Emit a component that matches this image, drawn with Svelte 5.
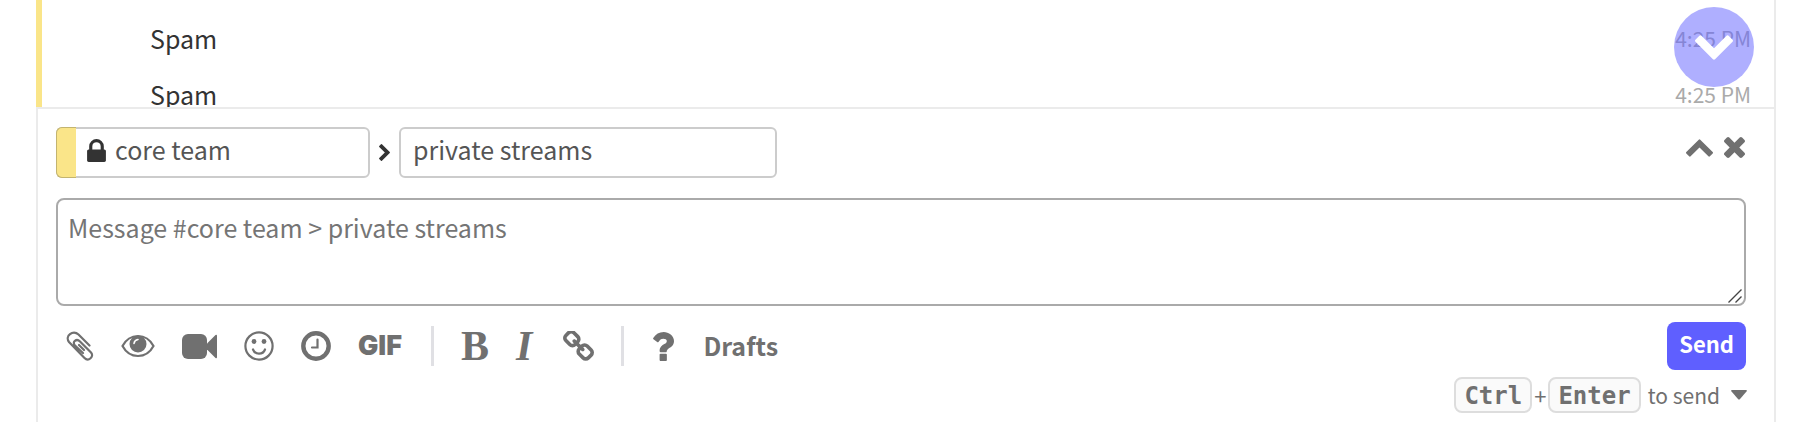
<script lang="ts">
    type Message = { content: string; time: string };

    let {
        messages = [
            { content: "Spam", time: "4:25 PM" },
            { content: "Spam", time: "4:25 PM" },
        ],
    }: { messages?: Message[] } = $props();

    let stream = $state("core team");
    let topic = $state("private streams");
    let draft = $state("");

    let placeholder = $derived(`Message #${stream} > ${topic}`);

    const chevron =
        "M1683 1331l-166 165q-19 19-45 19t-45-19l-531-531-531 531q-19 19-45 19t-45-19l-166-165q-19-19-19-45.5t19-45.5l742-741q19-19 45-19t45 19l742 741q19 19 19 45.5t-19 45.5z";
</script>

<main class="column">
    <section class="feed">
        {#each messages as message}
            <div class="message">
                <span class="message_content">{message.content}</span>
                <a class="message_time" href="#top">{message.time}</a>
            </div>
        {/each}
        <button class="scroll-down" aria-label="Scroll to bottom">
            <svg width="38" height="25" viewBox="-1702 -1515 1612 1035"><path transform="rotate(180)" d={chevron} /></svg>
        </button>
    </section>

    <form class="compose" onsubmit={(e) => e.preventDefault()}>
        <!-- Recipient -->
        <div class="recipient">
            <label class="stream">
                <span class="stream_color"></span>
                <svg class="stream_lock" width="19" height="23" viewBox="320 128 1152 1408"><path d="M640 768h512v-192q0-106-75-181t-181-75-181 75-75 181v192zm832 96v576q0 40-28 68t-68 28h-960q-40 0-68-28t-28-68v-576q0-40 28-68t68-28h32v-192q0-184 132-316t316-132 316 132 132 316v192h32q40 0 68 28t28 68z" /></svg>
                <input class="stream_input" type="text" aria-label="Stream" bind:value={stream} />
            </label>
            <svg class="recipient_arrow" width="11" height="17" viewBox="-1515 90 1035 1612"><path transform="rotate(90)" d={chevron} /></svg>
            <input class="topic" type="text" aria-label="Topic" bind:value={topic} />
            <div class="window-buttons">
                <button type="button" aria-label="Expand compose box">
                    <svg width="27" height="18" viewBox="90 480 1612 1035"><path d={chevron} /></svg>
                </button>
                <button type="button" aria-label="Close compose box">
                    <svg width="21" height="21" viewBox="302 366 1188 1188"><path d="M1490 1322q0 40-28 68l-136 136q-28 28-68 28t-68-28l-294-294-294 294q-28 28-68 28t-68-28l-136-136q-28-28-28-68t28-68l294-294-294-294q-28-28-28-68t28-68l136-136q28-28 68-28t68 28l294 294 294-294q28-28 68-28t68 28l136 136q28 28 28 68t-28 68l-294 294 294 294q28 28 28 68z" /></svg>
                </button>
            </div>
        </div>

        <!-- Message body -->
        <div class="editor">
            <textarea aria-label="Message" {placeholder} bind:value={draft}></textarea>
            <svg class="editor_grip" width="14" height="14" viewBox="0 0 14 14"><path d="M.5 13.5l13-13M7.5 13.5l6-6" /></svg>
        </div>

        <!-- Toolbar -->
        <div class="toolbar">
            <div class="tools">
                <button type="button" class="tool" aria-label="Upload files">
                    <svg width="28" height="30" viewBox="0 0 28 30" class="line"><path d="M23.5 14.5L12.5 3.500C7-1.500-1.500 5 3 11L18.500 27C22.500 31 28.500 25.500 25 21.500L14 10.500C10.500 7 5.500 11 9 14.500L17 22M13 14l5 5" /></svg>
                </button>
                <button type="button" class="tool" aria-label="Preview">
                    <svg width="34" height="24" viewBox="0 0 34 24"><path class="line" d="M1.500 12C5 5.500 10.500 2 17 2s12 3.500 15.500 10C29 18.500 23.500 22 17 22S5 18.500 1.500 12z" /><circle cx="17" cy="10" r="8.500" /><path class="glint" d="M13 9.500q.5-3.500 4-4" /></svg>
                </button>
                <button type="button" class="tool" aria-label="Add video call">
                    <svg width="35" height="25" viewBox="0 0 35 25"><rect width="25" height="25" rx="6" /><path d="M25 9.500L33.500 1q1.500-1 1.500 1v21q0 2-1.500 1L25 15.500z" /></svg>
                </button>
                <button type="button" class="tool" aria-label="Add emoji">
                    <svg width="30" height="30" viewBox="0 0 30 30"><circle class="line" cx="15" cy="15" r="13.600" /><circle cx="10" cy="10.500" r="2.400" /><circle cx="20" cy="10.500" r="2.400" /><path class="line" d="M9 18.500c2 5.500 10 5.500 12 0" /></svg>
                </button>
                <button type="button" class="tool" aria-label="Add global time">
                    <svg width="30" height="30" viewBox="0 0 30 30"><circle class="line clock" cx="15" cy="15" r="12.700" /><path class="line" d="M16.500 8.500v8H11" /></svg>
                </button>
                <button type="button" class="tool gif">GIF</button>
                <span class="divider"></span>
                <button type="button" class="tool bold" aria-label="Bold">B</button>
                <button type="button" class="tool italic" aria-label="Italic">I</button>
                <button type="button" class="tool" aria-label="Link">
                    <svg width="31" height="31" viewBox="80 80 1632 1632"><path d="M1520 1216q0-40-28-68l-208-208q-28-28-68-28-42 0-72 32 3 3 19 18.500t21.500 21.500 15 19 13 25.500 3.500 27.500q0 40-28 68t-68 28q-15 0-27.500-3.500t-25.500-13-19-15-21.500-21.500-18.500-19q-33 31-33 73 0 40 28 68l206 207q27 27 68 27 40 0 68-26l147-146q28-28 28-67zm-703-705q0-40-28-68l-206-207q-28-28-68-28-39 0-68 27l-147 146q-28 28-28 67 0 40 28 68l208 208q27 27 68 27 42 0 72-31-3-3-19-18.500t-21.500-21.500-15-19-13-25.500-3.500-27.500q0-40 28-68t68-28q15 0 27.500 3.500t25.500 13 19 15 21.500 21.500 18.500 19q33-31 33-73zm895 705q0 120-85 203l-147 146q-83 83-203 83-121 0-204-85l-206-207q-83-83-83-203 0-123 88-209l-88-88q-86 88-208 88-120 0-204-84l-208-208q-84-84-84-204t85-203l147-146q83-83 203-83 121 0 204 85l206 207q83 83 83 203 0 123-88 209l88 88q86-88 208-88 120 0 204 84l208 208q84 84 84 204z" /></svg>
                </button>
                <span class="divider"></span>
                <button type="button" class="tool" aria-label="Message formatting">
                    <svg width="23" height="29" viewBox="387 256 1017 1280"><path d="M1088 1256v240q0 16-12 28t-28 12h-240q-16 0-28-12t-12-28v-240q0-16 12-28t28-12h240q16 0 28 12t12 28zm316-600q0 54-15.500 101t-35 76.500-55 59.500-57.500 43.500-61 35.500q-41 23-68.500 65t-27.500 67q0 17-12 32.500t-28 15.500h-240q-15 0-25.500-18.500t-10.500-37.500v-45q0-83 65-156.500t143-108.500q59-27 84-56t25-76q0-42-46.500-74t-107.500-32q-65 0-108 29-35 25-107 115-13 16-31 16-12 0-25-8l-164-125q-13-10-15.500-25t5.500-28q160-266 464-266 80 0 161 31t146 83 106 127.500 41 158.500z" /></svg>
                </button>
                <a class="drafts" href="#drafts">Drafts</a>
            </div>
            <button type="submit" class="send">Send</button>
        </div>

        <div class="hint">
            <kbd>Ctrl</kbd><span class="plus">+</span><kbd>Enter</kbd>
            <button type="button" class="hint_menu">
                <span>to send</span>
                <svg width="16" height="10" viewBox="0 0 16 10"><path d="M1 0h14q1.500 0 .5 1.500L9 9q-1 1-2 0L.5 1.500Q-.5 0 1 0z" /></svg>
            </button>
        </div>
    </form>
</main>

<style>
    :global(body) {
        background: #fff;
    }

    .column {
        box-sizing: border-box;
        min-height: 100vh;
        margin: 0 28px 0 36px;
        border-right: 2px solid #ebebeb;
        font-family: "Noto Sans CJK JP", "Open Sans", sans-serif;
        font-size: 25px;
        color: #333;
    }

    button,
    input,
    textarea {
        margin: 0;
        padding: 0;
        border: 0;
        background: none;
        font: inherit;
        color: inherit;
    }

    svg {
        display: block;
        fill: currentColor;
    }

    /* Message feed */
    .feed {
        position: relative;
        box-sizing: border-box;
        height: 107px;
        padding: 10px 23px 0 108px;
        border-left: 6px solid #fae589;
        overflow: hidden;
    }

    .message {
        display: flex;
        justify-content: space-between;
        height: 56px;
        line-height: 56px;
    }

    .message_time {
        font-size: 21px;
        color: #aaa;
        text-decoration: none;
    }

    .scroll-down {
        position: absolute;
        top: 7px;
        right: 20px;
        display: flex;
        align-items: center;
        justify-content: center;
        width: 80px;
        height: 80px;
        border-radius: 50%;
        background: rgba(96, 96, 255, 0.5);
        color: #fff;
    }

    /* Compose box */
    .compose {
        box-sizing: border-box;
        min-height: calc(100vh - 107px);
        padding: 18px 28px 9px 18px;
        border-top: 2px solid #ebebeb;
        border-left: 2px solid #ebebeb;
        color: #707070;
    }

    .recipient {
        display: flex;
        align-items: center;
        height: 51px;
    }

    .stream,
    .topic {
        box-sizing: border-box;
        height: 51px;
        border: 2px solid #ccc;
        border-radius: 6px;
        color: #555;
    }

    .stream {
        position: relative;
        display: flex;
        align-items: center;
        width: 314px;
        padding-left: 29px;
    }

    .stream_color {
        position: absolute;
        top: -2px;
        bottom: -2px;
        left: -2px;
        box-sizing: border-box;
        width: 20px;
        border: 1px solid #c3b46f;
        border-right: 0;
        border-radius: 6px 0 0 6px;
        background: #fae589;
    }

    .stream_lock {
        flex: none;
        margin: 0 9px 4px 0;
        color: #333;
    }

    .stream_input {
        box-sizing: border-box;
        flex: 1;
        min-width: 0;
        height: 47px;
        padding-bottom: 8px;
    }

    .recipient_arrow {
        margin: 0 9px;
        color: #333;
    }

    .topic {
        width: 378px;
        padding: 0 12px 8px;
    }

    .window-buttons {
        display: flex;
        align-items: center;
        gap: 11px;
        margin-left: auto;
        padding: 0 1px 10px 0;
    }

    .editor {
        position: relative;
        margin-top: 20px;
    }

    textarea {
        display: block;
        box-sizing: border-box;
        width: 100%;
        height: 108px;
        padding: 9px 10px;
        border: 2px solid #aaa;
        border-radius: 8px;
        line-height: 36px;
        color: #555;
        resize: none;
    }

    textarea::placeholder {
        color: #757575;
        opacity: 1;
    }

    .editor_grip {
        position: absolute;
        right: 4px;
        bottom: 3px;
        fill: none;
        stroke: #444;
        stroke-width: 1.4;
    }

    /* Toolbar */
    .toolbar {
        display: flex;
        justify-content: space-between;
        margin-top: 16px;
    }

    .tools {
        display: flex;
        align-items: center;
        gap: 27px;
        height: 48px;
        padding-left: 10px;
    }

    .line {
        fill: none;
        stroke: currentColor;
        stroke-width: 2.2;
        stroke-linecap: round;
    }

    .clock {
        stroke-width: 4.4;
    }

    .glint {
        fill: none;
        stroke: #fff;
        stroke-width: 1.6;
        stroke-linecap: round;
    }

    .gif {
        padding-right: 2px;
        font: 900 27px/30px Inter, sans-serif;
    }

    .divider {
        width: 3px;
        height: 40px;
        background: #e0e0e4;
    }

    .bold,
    .italic {
        font: bold 42px/40px "Liberation Serif", serif;
    }

    .italic {
        padding-right: 4px;
        font-style: italic;
    }

    .drafts {
        padding: 0 0 2px 2px;
        font-weight: 700;
        line-height: 40px;
        color: inherit;
        text-decoration: none;
    }

    .send {
        height: 48px;
        padding: 0 12px 6px;
        border-radius: 8px;
        background: #5f5fff;
        font-size: 22px;
        font-weight: 700;
        line-height: 42px;
        color: #fff;
    }

    .hint {
        display: flex;
        align-items: center;
        justify-content: flex-end;
        height: 36px;
        margin-top: 7px;
        font-size: 22px;
        line-height: 36px;
    }

    kbd {
        box-sizing: border-box;
        height: 36px;
        padding: 0 8px;
        border: 2px solid #ddd;
        border-radius: 8px;
        background: #fafafa;
        font: bold 24px/34px "DejaVu Sans Mono", monospace;
    }

    .plus {
        padding: 0 2px;
    }

    .hint_menu {
        display: flex;
        align-items: center;
        gap: 11px;
        margin: 0 -1px 0 7px;
    }

    .hint_menu span {
        font-size: 21px;
    }
</style>
